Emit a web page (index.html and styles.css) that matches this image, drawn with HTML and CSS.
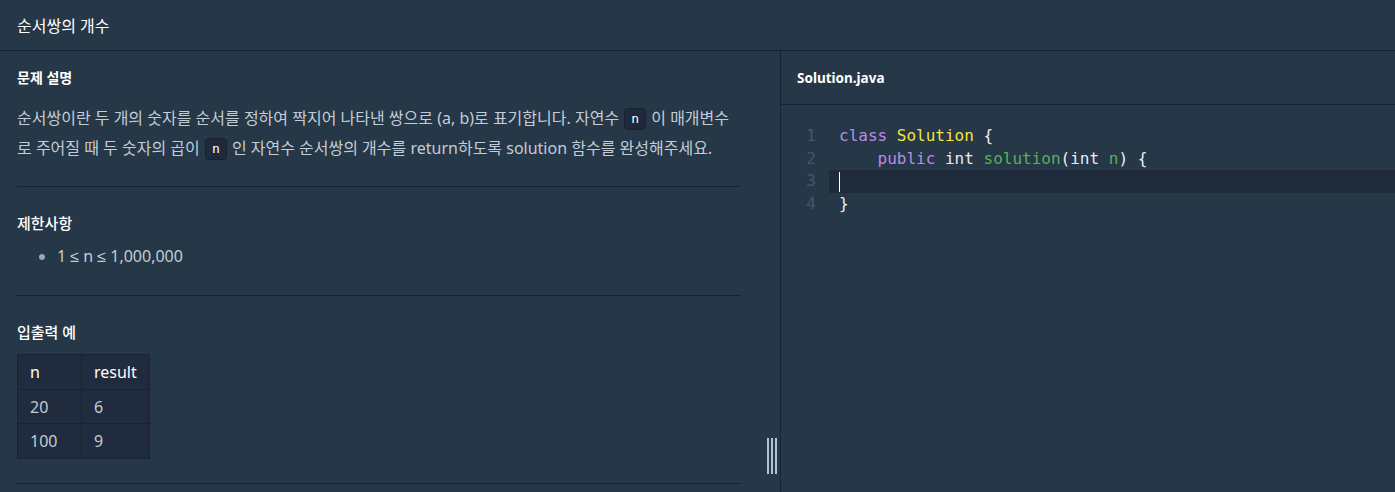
FILE: index.html
```html
<!DOCTYPE html>
<html lang="ko">
<head>
<meta charset="utf-8">
<title>순서쌍의 개수</title>
<link rel="stylesheet" href="styles.css">
</head>
<body>
<header class="topbar">
  <h1 class="title">순서쌍의 개수</h1>
</header>
<main class="layout">
  <section class="guide">
    <div class="guide-content">
      <h6 class="guide-heading">문제 설명</h6>
      <p class="desc">순서쌍이란 두 개의 숫자를 순서를 정하여 짝지어 나타낸 쌍으로 (a, b)로 표기합니다. 자연수 <code class="inline">n</code> 이 매개변수로 주어질 때 두 숫자의 곱이 <code class="inline">n</code> 인 자연수 순서쌍의 개수를 return하도록 solution 함수를 완성해주세요.</p>
      <hr class="rule">
      <h5 class="sub-heading">제한사항</h5>
      <ul class="limits">
        <li>1 ≤ n ≤ 1,000,000</li>
      </ul>
      <hr class="rule">
      <h5 class="sub-heading">입출력 예</h5>
      <table class="io-table">
        <thead><tr><th>n</th><th>result</th></tr></thead>
        <tbody>
          <tr><td>20</td><td>6</td></tr>
          <tr><td>100</td><td>9</td></tr>
        </tbody>
      </table>
      <hr class="rule rule-last">
    </div>
    <div class="grip"><span></span><span></span><span></span></div>
  </section>
  <section class="editor">
    <div class="tab-bar"><span class="tab-name">Solution.java</span></div>
    <div class="code">
      <div class="line"><span class="ln">1</span><span class="src"><span class="kw">class</span> <span class="cls">Solution</span> {</span></div>
      <div class="line"><span class="ln">2</span><span class="src">    <span class="kw">public</span> int <span class="fn">solution</span>(int <span class="var">n</span>) {</span></div>
      <div class="line active"><span class="ln">3</span><span class="src"><span class="cursor"></span></span></div>
      <div class="line"><span class="ln">4</span><span class="src">}</span></div>
    </div>
  </section>
</main>
</body>
</html>
```
FILE: styles.css
```css
* { box-sizing: border-box; }
html, body { margin: 0; padding: 0; }
body {
  background: #263747;
  font-family: "Noto Sans", "Liberation Sans", "Noto Sans CJK KR", sans-serif;
  color: #c2cdd8;
  height: 492px;
  overflow: hidden;
}
.topbar {
  height: 51px;
  border-bottom: 1px solid #172334;
  display: flex;
  align-items: center;
  padding-left: 17px;
}
.title {
  margin: 0;
  font-size: 16px;
  font-weight: 400;
  color: #ffffff;
}
.layout {
  display: flex;
  height: 441px;
}
.guide {
  width: 781px;
  border-right: 1px solid #172334;
  position: relative;
}
.guide-content {
  width: 741px;
  padding: 17px 0 0 17px;
}
.guide-heading {
  margin: 0 0 15px;
  font-size: 14px;
  font-weight: 700;
  color: #ffffff;
  line-height: 20px;
}
.desc {
  margin: 0;
  font-size: 16px;
  line-height: 30px;
  color: #c2cdd8;
}
.inline {
  display: inline-block;
  font-family: "DejaVu Sans Mono", monospace;
  font-size: 13px;
  line-height: 20px;
  height: 22px;
  color: #ffffff;
  background: #1e2a3b;
  border: 1px solid #18222f;
  border-radius: 4px;
  padding: 0 6px;
  margin: 0 1px;
  vertical-align: 1px;
}
.rule {
  border: 0;
  border-top: 1px solid #172334;
  margin: 23px 0 0;
}
.sub-heading {
  margin: 24px 0 0;
  font-size: 15px;
  font-weight: 500;
  color: #ffffff;
  line-height: 24px;
}
.limits {
  margin: 9px 0 27px;
  padding-left: 40px;
  font-size: 16px;
  line-height: 24px;
  color: #c2cdd8;
}
.limits li::marker { color: #98a8b9; }
.io-table {
  margin-top: 10px;
  border-collapse: collapse;
  font-size: 16px;
  color: #c2cdd8;
  background: #202b3d;
}
.io-table th, .io-table td {
  border: 1px solid #172334;
  height: 34.7px;
  padding: 0 12px;
  text-align: left;
}
.io-table th { font-weight: 400; color: #ffffff; }
.io-table th:first-child, .io-table td:first-child { width: 64px; }
.io-table th:last-child, .io-table td:last-child { width: 66px; }
.rule-last { margin-top: 24px; }
.grip {
  position: absolute;
  left: 767px;
  top: 387px;
  display: flex;
  gap: 2px;
}
.grip span {
  width: 2px;
  height: 36px;
  background: #b2c4d4;
}
.editor {
  flex: 1;
  display: flex;
  flex-direction: column;
}
.tab-bar {
  height: 54px;
  border-bottom: 1px solid #172334;
  display: flex;
  align-items: center;
  padding-left: 16px;
}
.tab-name {
  font-size: 13.5px;
  font-weight: 700;
  color: #ffffff;
}
.code {
  padding-top: 20px;
  font-family: "DejaVu Sans Mono", monospace;
  font-size: 16px;
}
.line {
  display: flex;
  height: 22.7px;
  line-height: 22.7px;
  padding-left: 48px;
}
.line.active { background: #1f2a3a; }
.ln {
  margin-left: -48px;
  padding-right: 13px;
  text-align: right;
  color: #46566a;
  flex: none;
  width: 48px;
}
.line.active .ln { background: #263747; }
.src {
  white-space: pre;
  color: #e9edf2;
  padding-left: 10px;
}
.kw { color: #b98ce3; }
.cls { color: #f5e33f; }
.fn { color: #58b05b; }
.var { color: #58b05b; }
.cursor {
  display: inline-block;
  width: 1px;
  height: 20px;
  vertical-align: middle;
  background: #ffffff;
}
```
